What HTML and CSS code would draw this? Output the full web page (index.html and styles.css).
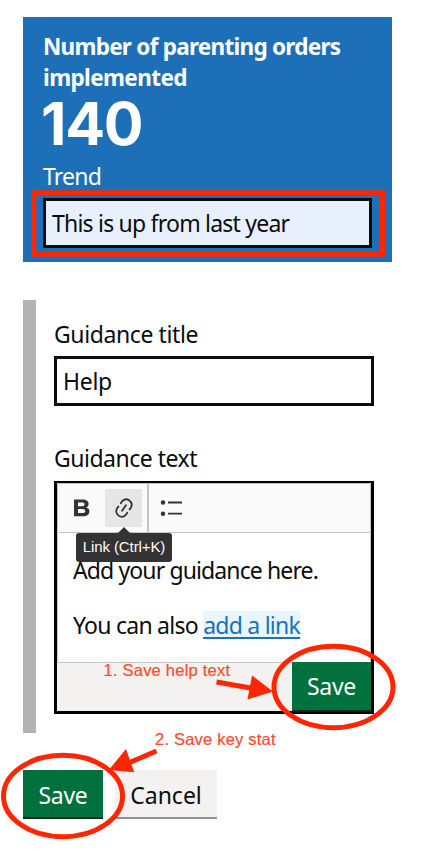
FILE: index.html
```html
<!DOCTYPE html>
<html lang="en">
<head>
<meta charset="utf-8">
<title>Edit key stat</title>
<link rel="stylesheet" href="styles.css">
</head>
<body>
<main class="page">
  <section class="stat">
    <h1 class="stat-title"><span class="t1">Number of parenting orders</span><br><span class="t2">implemented</span></h1>
    <div class="stat-value">140</div>
    <div class="stat-label">Trend</div>
    <div class="field stat-field"><span class="trend-text">This is up from last year</span></div>
  </section>
  <section class="guidance">
    <div class="label">Guidance title</div>
    <div class="field"><span class="help-text">Help</span></div>
    <div class="label label-text">Guidance text</div>
    <div class="editor">
      <div class="toolbar">
        <div class="tool">
          <svg width="20" height="20" viewBox="0 0 20 20"><path fill="#333" fill-rule="evenodd" d="M2 1.500h8.400c3.900 0 6.200 1.600 6.200 4.400 0 1.900-1 3-2.500 3.500 2 .5 3.300 1.800 3.300 4 0 3-2.400 4.800-6.400 4.800H2zM6 4.500v3.700h3.600c2 0 3-.6 3-1.900s-.9-1.800-2.800-1.800zM6 11.100v4h4.100c2.200 0 3.200-.6 3.200-2 0-1.300-1.100-2-3.200-2z"/></svg>
        </div>
        <div class="tool tool-link">
          <svg width="24" height="24" viewBox="0 0 20 20"><path fill="#333" d="m11.077 15 .991-1.416a.75.75 0 1 1 1.229.86l-1.148 1.64a.748.748 0 0 1-.217.206 5.251 5.251 0 0 1-8.503-5.955.741.741 0 0 1 .12-.274l1.147-1.639a.75.75 0 1 1 1.228.86L4.933 10.7l.006.003a3.75 3.75 0 0 0 6.132 4.294l.006.004zm5.494-5.335a.748.748 0 0 1-.12.274l-1.147 1.639a.75.75 0 1 1-1.228-.86l.86-1.23a3.75 3.75 0 0 0-6.144-4.301l-.86 1.229a.75.75 0 0 1-1.229-.86l1.148-1.64a.748.748 0 0 1 .217-.206 5.251 5.251 0 0 1 8.503 5.955zm-4.563-2.532a.75.75 0 0 1 .184 1.045l-3.155 4.505a.75.75 0 1 1-1.229-.86l3.155-4.506a.75.75 0 0 1 1.045-.184z"/></svg>
          <div class="tooltip">Link (Ctrl+K)</div>
        </div>
        <div class="separator"></div>
        <div class="tool">
          <svg width="24" height="24" viewBox="0 0 24 24" fill="#333"><circle cx="3" cy="6.500" r="2.200"/><circle cx="3" cy="17.700" r="2.200"/><path d="M8 5.600h14v1.800H8zM8 16.800h14v1.800H8z"/></svg>
        </div>
      </div>
      <div class="content">
        <p><span class="p1">Add your guidance here.</span></p>
        <p><span class="p2">You can also </span><a class="link">add a link</a></p>
      </div>
      <div class="editor-actions"><div class="button"><span>Save</span></div></div>
    </div>
  </section>
  <div class="actions">
    <div class="button"><span>Save</span></div>
    <div class="button secondary"><span>Cancel</span></div>
  </div>
  <svg class="notes" width="435" height="857" viewBox="0 0 435 857">
    <g fill="none" stroke="#ff2600" stroke-width="5">
      <rect x="33.800" y="192.800" width="348.700" height="61.400"/>
      <ellipse cx="333.500" cy="687" rx="59.500" ry="40.700"/>
      <ellipse cx="63" cy="796" rx="59.500" ry="40.700"/>
      <path d="M216.500 682l34 6M156.500 751l-28 12"/>
    </g>
    <path fill="#ff2600" d="M252 675.500l-4.500 24 25.500-8zM126 749l8.300 23.300-25.500-2.300z"/>
    <g class="note-text"><text x="103.500" y="675.500" textLength="126.500">1. Save help text</text><text x="155" y="744.500" textLength="120.500">2. Save key stat</text></g>
  </svg>
</main>
</body>
</html>
```
FILE: styles.css
```css
* { box-sizing: border-box; }
body {
  margin: 0;
  background: #fff;
  color: #0b0c0c;
  font: 23px/30px "Noto Sans", "Open Sans", sans-serif;
}
.page { position: relative; width: 435px; height: 857px; padding: 17px 43px 0 23px; }
.page span, .page a { white-space: pre; }
.stat { height: 245px; padding: 14px 20px 0; background: #1d70b8; color: #fff; }
.stat-title { margin: 0; font-size: 22.5px; line-height: 31px; font-weight: 700; }
.t1 { letter-spacing: -0.73px; }
.t2 { letter-spacing: -0.6px; }
.stat-value { font-family: Inter, sans-serif; font-size: 59px; line-height: 62px; font-weight: 700; letter-spacing: -1.3px; margin-left: -2px; }
.stat-label { margin-top: 6px; line-height: 30px; height: 37px; letter-spacing: -0.8px; }
.field {
  display: flex;
  align-items: center;
  width: 320px;
  height: 50px;
  padding: 0 0 1px 6px;
  border: 3px solid #0b0c0c;
  background: #fff;
  color: #0b0c0c;
}
.stat-field { width: 329px; background: #e8f0fe; }
.trend-text { letter-spacing: -0.78px; }
.help-text { letter-spacing: -0.3px; }
.p1 { letter-spacing: -0.88px; }
.p2, .link { letter-spacing: -0.75px; }
.button span { letter-spacing: -0.3px; }
.guidance { height: 433px; margin-top: 38px; padding: 19px 0 0 18px; border-left: 13px solid #b1b4b6; }
.label { height: 37px; line-height: 30px; letter-spacing: -0.4px; }
.label-text { margin-top: 37px; height: 38px; letter-spacing: -0.5px; }
.editor { width: 320px; height: 233px; border: 3px solid #000; border-top-width: 2px; background: #f3f2f1; }
.toolbar {
  display: flex;
  height: 50px;
  padding: 0 9px 0 5px;
  border: 1px solid #c4c4c4;
  border-radius: 2px 2px 0 0;
  background: #fafafa;
  align-items: center;
}
.tool { position: relative; display: flex; align-items: center; justify-content: center; width: 37px; height: 38px; border-radius: 2px; }
.tool-link { margin-left: 5px; background: #e6e6e6; }
.separator { width: 2px; height: 48px; margin: 0 4px 0 5px; background: #c4c4c4; }
.tooltip {
  position: absolute;
  z-index: 2;
  top: 44px;
  left: -29px;
  width: 96px;
  height: 29px;
  border-radius: 3px;
  background: #333;
  color: #fff;
  font: 15px/28px "Liberation Sans", sans-serif;
  letter-spacing: -0.1px;
  text-align: center;
  white-space: nowrap;
}
.tooltip::before {
  content: "";
  position: absolute;
  top: -6px;
  left: 42px;
  border: 6px solid transparent;
  border-top: 0;
  border-bottom-color: #333;
}
.content { height: 130px; padding: 22px 15px 0; background: #fff; border: 1px solid #c4c4c4; border-top: 0; border-radius: 0 0 2px 2px; }
.content p { height: 30px; margin: 0 0 25px; }
.link { background: #e8f5fd; color: #1d70b8; text-decoration: underline; text-decoration-thickness: 2px; text-underline-offset: 3px; line-height: 28px; display: inline-block; }
.editor-actions { display: flex; justify-content: flex-end; margin-top: -1px; }
.button { display: flex; align-items: center; justify-content: center; width: 79px; height: 48px; background: #00703c; color: #fff; box-shadow: 0 2px 0 #002d18; }
.actions { display: flex; gap: 12px; margin-top: 37px; }
.actions .button { width: 80px; height: 47px; padding-top: 2px; }
.actions .secondary { width: 102px; background: #f3f2f1; color: #0b0c0c; box-shadow: 0 2px 0 #929191; }
.secondary span { letter-spacing: 0; }
.notes { position: absolute; z-index: 3; top: 0; left: 0; }
.note-text { font: 16.5px "Liberation Sans", sans-serif; fill: #ff4b2e; stroke: #ff4b2e; stroke-width: 0.2px; }
```
